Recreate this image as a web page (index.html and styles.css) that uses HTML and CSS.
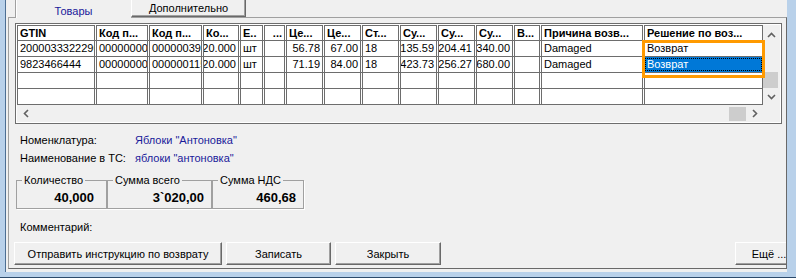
FILE: index.html
```html
<!DOCTYPE html>
<html lang="ru">
<head>
<meta charset="utf-8">
<title>Товары</title>
<link rel="stylesheet" href="styles.css">
</head>
<body>
<div class="frame">
  <div class="window">
    <div class="tabs">
      <div class="tab tab-active">Товары</div>
      <div class="tab tab-back">Дополнительно</div>
    </div>
    <div class="page">
      <div class="grid-wrap">
        <div class="grid">
          <div class="grid-main">
            <div class="rows">
              <div class="row row-head">
                <div class="c">GTIN</div>
                <div class="c">Код п...</div>
                <div class="c">Код п...</div>
                <div class="c">Ко...</div>
                <div class="c">Е..</div>
                <div class="c r">...</div>
                <div class="c">Це...</div>
                <div class="c">Це...</div>
                <div class="c">Ст...</div>
                <div class="c">Су...</div>
                <div class="c">Су...</div>
                <div class="c">Су...</div>
                <div class="c">В...</div>
                <div class="c">Причина возв...</div>
                <div class="c">Решение по воз...</div>
              </div>
              <div class="row">
                <div class="c">2000033322296</div>
                <div class="c">000000000012</div>
                <div class="c">0000003912</div>
                <div class="c r">20.000</div>
                <div class="c">шт</div>
                <div class="c"></div>
                <div class="c r">56.78</div>
                <div class="c r">67.00</div>
                <div class="c">18</div>
                <div class="c r">1135.59</div>
                <div class="c r">204.41</div>
                <div class="c r">1340.00</div>
                <div class="c"></div>
                <div class="c">Damaged</div>
                <div class="c">Возврат</div>
              </div>
              <div class="row">
                <div class="c">9823466444</div>
                <div class="c">0000000000245</div>
                <div class="c">000000115</div>
                <div class="c r">20.000</div>
                <div class="c">шт</div>
                <div class="c"></div>
                <div class="c r">71.19</div>
                <div class="c r">84.00</div>
                <div class="c">18</div>
                <div class="c r">1423.73</div>
                <div class="c r">256.27</div>
                <div class="c r">1680.00</div>
                <div class="c"></div>
                <div class="c">Damaged</div>
                <div class="c sel">Возврат</div>
              </div>
              <div class="row">
                <div class="c"></div><div class="c"></div><div class="c"></div><div class="c"></div><div class="c"></div>
                <div class="c"></div><div class="c"></div><div class="c"></div><div class="c"></div><div class="c"></div>
                <div class="c"></div><div class="c"></div><div class="c"></div><div class="c"></div><div class="c"></div>
              </div>
              <div class="row">
                <div class="c"></div><div class="c"></div><div class="c"></div><div class="c"></div><div class="c"></div>
                <div class="c"></div><div class="c"></div><div class="c"></div><div class="c"></div><div class="c"></div>
                <div class="c"></div><div class="c"></div><div class="c"></div><div class="c"></div><div class="c"></div>
              </div>
            </div>
            <div class="hscroll">
              <div class="sb-btn"><svg width="6" height="9" viewBox="0 0 6 9"><path d="M5 1 L1.5 4.5 L5 8" fill="none" stroke="#606060" stroke-width="1.6"/></svg></div>
              <div class="h-track"><div class="h-thumb"></div></div>
              <div class="sb-btn"><svg width="6" height="9" viewBox="0 0 6 9"><path d="M1 1 L4.5 4.5 L1 8" fill="none" stroke="#606060" stroke-width="1.6"/></svg></div>
            </div>
          </div>
          <div class="vscroll">
            <div class="sb-btn sb-up"><svg width="9" height="6" viewBox="0 0 9 6"><path d="M1 5 L4.5 1.5 L8 5" fill="none" stroke="#606060" stroke-width="1.6"/></svg></div>
            <div class="v-track"><div class="v-thumb"></div></div>
            <div class="sb-btn"><svg width="9" height="6" viewBox="0 0 9 6"><path d="M1 1 L4.5 4.5 L8 1" fill="none" stroke="#606060" stroke-width="1.6"/></svg></div>
            <div class="corner"></div>
          </div>
        </div>
        <div class="highlight"></div>
      </div>

      <div class="info">
        <div class="info-row"><span class="info-label">Номенклатура:</span><span class="info-value">Яблоки "Антоновка"</span></div>
        <div class="info-row"><span class="info-label">Наименование в ТС:</span><span class="info-value">яблоки "антоновка"</span></div>
      </div>

      <div class="totals">
        <fieldset class="total total-qty">
          <legend>Количество</legend>
          <div class="total-val">40,000</div>
        </fieldset>
        <fieldset class="total total-sum">
          <legend>Сумма всего</legend>
          <div class="total-val">3`020,00</div>
        </fieldset>
        <fieldset class="total total-vat">
          <legend>Сумма НДС</legend>
          <div class="total-val">460,68</div>
        </fieldset>
      </div>

      <div class="comment">Комментарий:</div>

      <div class="buttons">
        <button class="btn btn-send">Отправить инструкцию по возврату</button>
        <button class="btn btn-save">Записать</button>
        <button class="btn btn-close">Закрыть</button>
        <button class="btn btn-more">Ещё ...</button>
      </div>
    </div>
  </div>
</div>
</body>
</html>
```

FILE: styles.css
```css
* { box-sizing: border-box; }

html, body {
  margin: 0;
  padding: 0;
}

body {
  width: 796px;
  height: 278px;
  overflow: hidden;
  background: #b9d1ea;
  font-family: "Liberation Sans", Arial, sans-serif;
  font-size: 11px;
  color: #000;
}

.frame {
  width: 796px;
  height: 278px;
  padding: 0 9px 5px 5px;
  border-bottom: 1px solid #2d4a6b;
}

.window {
  height: 272px;
  border-left: 1px solid #4d6f94;
  background: #f0f0f0;
  padding: 0 0 3px 2px;
  display: flex;
  flex-direction: column;
}

/* tabs */
.tabs {
  height: 17px;
  flex: none;
  display: flex;
  align-items: flex-start;
  padding-left: 7px;
  position: relative;
  z-index: 1;
}

.tab {
  text-align: center;
  background: #f0f0f0;
}

.tab-active {
  width: 116px;
  height: 18px;
  line-height: 18px;
  padding-top: 2px;
  border-left: 1px solid #a0a0a0;
  box-shadow: inset 1px 0 0 #fff;
  color: #1a1a9a;
}

.tab-back {
  width: 115px;
  height: 17px;
  line-height: 16px;
  border-left: 1px solid #fff;
  border-right: 1px solid #696969;
  border-bottom: 1px solid #696969;
  box-shadow: inset -1px -1px 0 #a0a0a0;
}

/* page */
.page {
  flex: 1;
  border: 1px solid;
  border-color: #a0a0a0 #696969 #696969 #a0a0a0;
  padding: 5px 4px 3px 6px;
  overflow: hidden;
  display: flex;
  flex-direction: column;
}

/* grid */
.grid-wrap {
  position: relative;
  width: 767px;
  height: 101px;
  flex: none;
}

.grid {
  display: flex;
  width: 767px;
  height: 101px;
  border: 1px solid #6d6d6d;
  padding: 1px;
  background: #fff;
}

.grid-main {
  width: 746px;
  display: flex;
  flex-direction: column;
}

.rows {
  height: 80px;
  overflow: hidden;
}

.row {
  display: grid;
  grid-template-columns: 78px 52px 53px 36px 23px 21px 37px 37px 37px 37px 37px 37px 26px 102px 119px;
  column-gap: 1px;
  height: 16px;
  border-bottom: 1px solid #6d6d6d;
  background: #fff;
}

.c {
  border-left: 1px solid #6d6d6d;
  border-right: 1px solid #6d6d6d;
  padding: 0 2px;
  line-height: 15px;
  white-space: nowrap;
  overflow: hidden;
}

.row-head .c {
  font-weight: bold;
  border-top: 1px solid #6d6d6d;
  line-height: 14px;
}

.r {
  display: flex;
  justify-content: flex-end;
}

.sel {
  background: #0078d7;
  color: #fff;
  outline: 1px dotted #000;
  outline-offset: -2px;
}

/* scrollbars */
.hscroll {
  height: 17px;
  display: flex;
  background: #f0f0f0;
}

.sb-btn {
  width: 17px;
  height: 17px;
  flex: none;
  display: flex;
  align-items: center;
  justify-content: center;
}

.h-track {
  flex: 1;
  display: flex;
  justify-content: flex-end;
  align-items: center;
}

.h-thumb {
  width: 17px;
  height: 14px;
  background: #cdcdcd;
}

.vscroll {
  width: 17px;
  display: flex;
  flex-direction: column;
  background: #f0f0f0;
}

.sb-up {
  padding-top: 3px;
}

.v-track {
  flex: 1;
  display: flex;
  flex-direction: column;
  justify-content: flex-end;
}

.v-thumb {
  width: 15px;
  height: 16px;
  background: #cdcdcd;
}

.corner {
  height: 17px;
  flex: none;
}

.highlight {
  position: absolute;
  left: 627px;
  top: 17px;
  width: 123px;
  height: 38px;
  border: 3px solid #ff9a00;
}

/* info */
.info {
  margin-top: 7px;
  padding-left: 5px;
  flex: none;
}

.info-row {
  display: flex;
  height: 18px;
  line-height: 18px;
}

.info-label {
  width: 115px;
}

.info-value {
  color: #1a1a9a;
}

/* totals */
.totals {
  display: flex;
  margin-top: 7px;
  margin-left: 1px;
  flex: none;
}

.total {
  margin: 0;
  padding: 0;
  min-width: 0;
  height: 35px;
  border: 1px solid #a0a0a0;
  box-shadow: 1px 1px 0 #fff;
}

.total legend {
  margin-left: 5px;
  padding: 0 2px;
  line-height: 13px;
}

.total-qty { width: 91px; }
.total-sum { width: 105px; }
.total-vat { width: 92px; }

.total-val {
  font-weight: bold;
  font-size: 13px;
  line-height: 21px;
  text-align: right;
  padding-right: 7px;
}

.total-qty .total-val {
  padding-right: 12px;
}

.comment {
  margin-top: 9px;
  padding-left: 5px;
  line-height: 18px;
  height: 18px;
  flex: none;
}

/* buttons */
.buttons {
  display: flex;
  gap: 4px;
  margin-top: 6px;
  margin-left: -1px;
  margin-right: -21px;
  flex: none;
}

.btn {
  height: 23px;
  padding: 0;
  margin: 0;
  font: inherit;
  color: #000;
  text-align: center;
  background: #f0f0f0;
  border: 1px solid;
  border-color: #fff #696969 #696969 #fff;
  box-shadow: inset -1px -1px 0 #a0a0a0;
  border-radius: 0;
}

.btn-send { width: 208px; }
.btn-save { width: 105px; }
.btn-close { width: 106px; }
.btn-more { width: 68px; margin-left: auto; }
```
